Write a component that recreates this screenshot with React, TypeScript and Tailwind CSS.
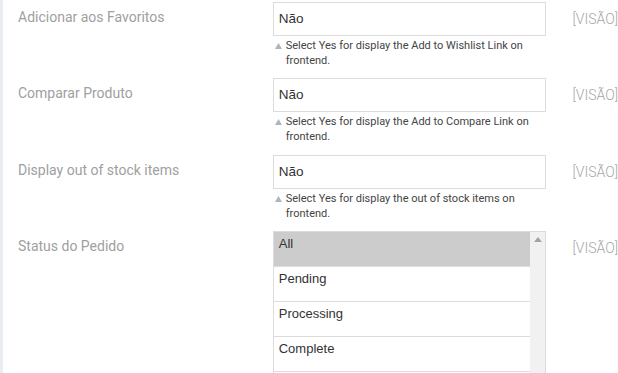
const rows = [
  { label: "Adicionar aos Favoritos", help: ["Select Yes for display the Add to Wishlist Link on", "frontend."], h: "h-[76px]" },
  { label: "Comparar Produto", help: ["Select Yes for display the Add to Compare Link on", "frontend."], h: "h-[77px]" },
  { label: "Display out of stock items", help: ["Select Yes for display the out of stock items on", "frontend."], h: "h-[76px]" },
];

const statuses = ["All", "Pending", "Processing", "Complete"];

function Scope() {
  return (
    <div className="pl-[26px] pt-[7px] text-[14px] leading-[20px] text-[#a6a6a6] whitespace-nowrap font-['Roboto',sans-serif] font-light">
      [VISÃO]
    </div>
  );
}

export default function App() {
  return (
    <div className="h-[373px] w-[618px] overflow-hidden bg-white border-l-[3px] border-[#e9ecf1]">
      <div className="pt-[2px]">
        {rows.map((r) => (
          <div key={r.label} className={`flex ${r.h} pb-[10px]`}>
            <div className="w-[270px] pl-[15px] pt-[5px] text-[14px] leading-[20px] text-[#a0a0a0] font-['Roboto',sans-serif]">
              {r.label}
            </div>
            <div className="w-[274px]">
              <div className="h-[34px] border border-[#dcdcdc] px-[5px] flex items-center text-[13.5px] text-[#333] font-['Liberation_Sans',sans-serif]">
                Não
              </div>
              <div className="mt-[2px] flex text-[11px] leading-[15px] text-[#444] font-['Roboto',sans-serif]">
                <span className="w-[13px] shrink-0 pl-[2px] pt-[5px]">
                  <svg width="7" height="6" viewBox="0 0 7 6" className="block">
                    <path d="M3.5 0 L7 6 L0 6 Z" fill="#b0b5ba" />
                  </svg>
                </span>
                <span>
                  {r.help[0]}
                  <br />
                  {r.help[1]}
                </span>
              </div>
            </div>
            <Scope />
          </div>
        ))}
        <div className="flex">
          <div className="w-[270px] pl-[15px] pt-[5px] text-[14px] leading-[20px] text-[#a0a0a0] font-['Roboto',sans-serif]">
            Status do Pedido
          </div>
          <div className="w-[274px] h-[160px] border border-[#dcdcdc] flex overflow-hidden">
            <div className="flex-1">
              {statuses.map((s, i) => (
                <div
                  key={s}
                  className={`h-[35px] border-b border-[#dcdcdc] px-[5px] pt-[3px] text-[13px] leading-[17px] text-[#333] font-['Liberation_Sans',sans-serif] ${i === 0 ? "bg-[#cccccc] text-[#111]" : ""}`}
                >
                  {s}
                </div>
              ))}
            </div>
            <div className="w-[15px] bg-[#f1f1f1] flex justify-center pt-[5px]">
              <svg width="8" height="5" viewBox="0 0 8 5">
                <path d="M4 0 L8 5 L0 5 Z" fill="#a3a3a3" />
              </svg>
            </div>
          </div>
          <Scope />
        </div>
      </div>
    </div>
  );
}
